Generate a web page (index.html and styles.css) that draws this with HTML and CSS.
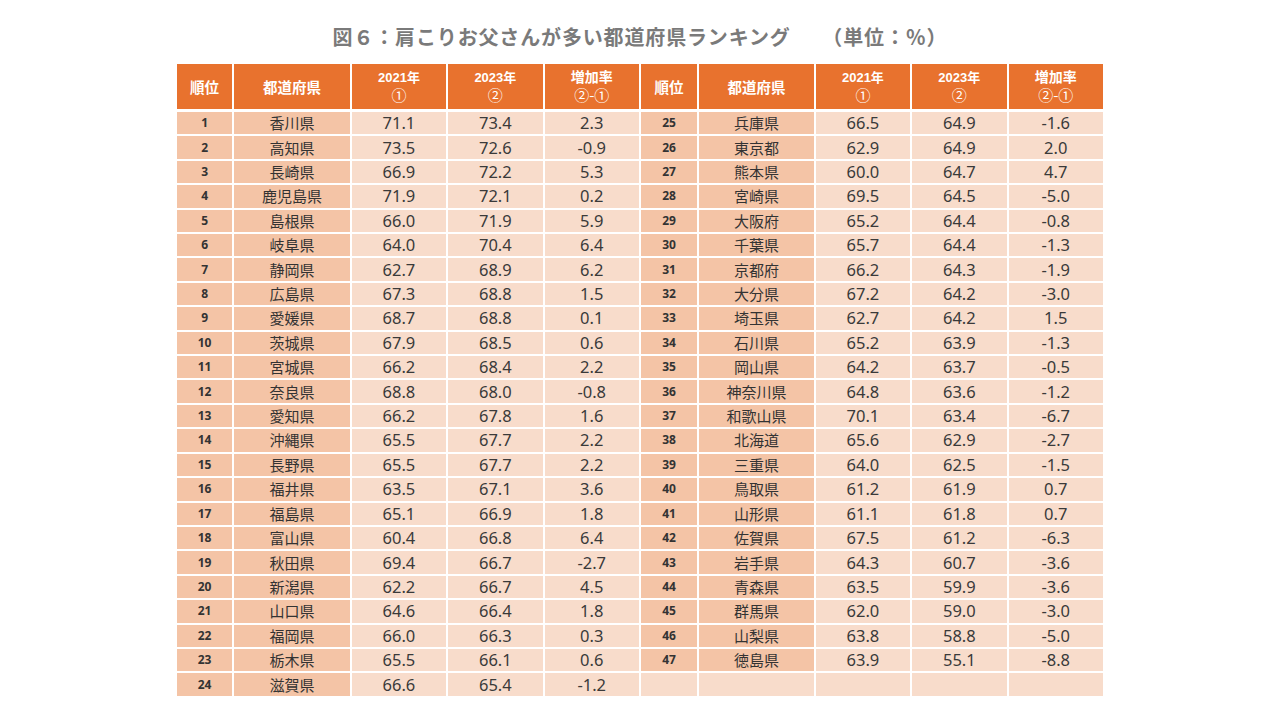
FILE: index.html
```html
<!DOCTYPE html>
<html lang="ja">
<head>
<meta charset="utf-8">
<title>肩こりお父さんが多い都道府県ランキング</title>
<link rel="stylesheet" href="styles.css">
</head>
<body>
<h1 class="title">図６：肩こりお父さんが多い都道府県ランキング　　（単位：％）</h1>
<table class="rank">
<colgroup>
<col class="c-rank"><col class="c-pref"><col class="c-num"><col class="c-num"><col class="c-num">
<col class="c-rank2"><col class="c-pref2"><col class="c-num"><col class="c-num"><col class="c-num">
</colgroup>
<thead>
<tr>
<th class="h1">順位</th><th class="h1">都道府県</th><th>2021年<br><span class="circ">①</span></th><th>2023年<br><span class="circ">②</span></th><th><span class="jp">増加率</span><br><span class="circ">②-①</span></th>
<th class="h1">順位</th><th class="h1">都道府県</th><th>2021年<br><span class="circ">①</span></th><th>2023年<br><span class="circ">②</span></th><th><span class="jp">増加率</span><br><span class="circ">②-①</span></th>
</tr>
</thead>
<tbody>
<tr><td class="r">1</td><td class="p">香川県</td><td>71.1</td><td>73.4</td><td>2.3</td><td class="r">25</td><td class="p">兵庫県</td><td>66.5</td><td>64.9</td><td>-1.6</td></tr>
<tr><td class="r">2</td><td class="p">高知県</td><td>73.5</td><td>72.6</td><td>-0.9</td><td class="r">26</td><td class="p">東京都</td><td>62.9</td><td>64.9</td><td>2.0</td></tr>
<tr><td class="r">3</td><td class="p">長崎県</td><td>66.9</td><td>72.2</td><td>5.3</td><td class="r">27</td><td class="p">熊本県</td><td>60.0</td><td>64.7</td><td>4.7</td></tr>
<tr><td class="r">4</td><td class="p">鹿児島県</td><td>71.9</td><td>72.1</td><td>0.2</td><td class="r">28</td><td class="p">宮崎県</td><td>69.5</td><td>64.5</td><td>-5.0</td></tr>
<tr><td class="r">5</td><td class="p">島根県</td><td>66.0</td><td>71.9</td><td>5.9</td><td class="r">29</td><td class="p">大阪府</td><td>65.2</td><td>64.4</td><td>-0.8</td></tr>
<tr><td class="r">6</td><td class="p">岐阜県</td><td>64.0</td><td>70.4</td><td>6.4</td><td class="r">30</td><td class="p">千葉県</td><td>65.7</td><td>64.4</td><td>-1.3</td></tr>
<tr><td class="r">7</td><td class="p">静岡県</td><td>62.7</td><td>68.9</td><td>6.2</td><td class="r">31</td><td class="p">京都府</td><td>66.2</td><td>64.3</td><td>-1.9</td></tr>
<tr><td class="r">8</td><td class="p">広島県</td><td>67.3</td><td>68.8</td><td>1.5</td><td class="r">32</td><td class="p">大分県</td><td>67.2</td><td>64.2</td><td>-3.0</td></tr>
<tr><td class="r">9</td><td class="p">愛媛県</td><td>68.7</td><td>68.8</td><td>0.1</td><td class="r">33</td><td class="p">埼玉県</td><td>62.7</td><td>64.2</td><td>1.5</td></tr>
<tr><td class="r">10</td><td class="p">茨城県</td><td>67.9</td><td>68.5</td><td>0.6</td><td class="r">34</td><td class="p">石川県</td><td>65.2</td><td>63.9</td><td>-1.3</td></tr>
<tr><td class="r">11</td><td class="p">宮城県</td><td>66.2</td><td>68.4</td><td>2.2</td><td class="r">35</td><td class="p">岡山県</td><td>64.2</td><td>63.7</td><td>-0.5</td></tr>
<tr><td class="r">12</td><td class="p">奈良県</td><td>68.8</td><td>68.0</td><td>-0.8</td><td class="r">36</td><td class="p">神奈川県</td><td>64.8</td><td>63.6</td><td>-1.2</td></tr>
<tr><td class="r">13</td><td class="p">愛知県</td><td>66.2</td><td>67.8</td><td>1.6</td><td class="r">37</td><td class="p">和歌山県</td><td>70.1</td><td>63.4</td><td>-6.7</td></tr>
<tr><td class="r">14</td><td class="p">沖縄県</td><td>65.5</td><td>67.7</td><td>2.2</td><td class="r">38</td><td class="p">北海道</td><td>65.6</td><td>62.9</td><td>-2.7</td></tr>
<tr><td class="r">15</td><td class="p">長野県</td><td>65.5</td><td>67.7</td><td>2.2</td><td class="r">39</td><td class="p">三重県</td><td>64.0</td><td>62.5</td><td>-1.5</td></tr>
<tr><td class="r">16</td><td class="p">福井県</td><td>63.5</td><td>67.1</td><td>3.6</td><td class="r">40</td><td class="p">鳥取県</td><td>61.2</td><td>61.9</td><td>0.7</td></tr>
<tr><td class="r">17</td><td class="p">福島県</td><td>65.1</td><td>66.9</td><td>1.8</td><td class="r">41</td><td class="p">山形県</td><td>61.1</td><td>61.8</td><td>0.7</td></tr>
<tr><td class="r">18</td><td class="p">富山県</td><td>60.4</td><td>66.8</td><td>6.4</td><td class="r">42</td><td class="p">佐賀県</td><td>67.5</td><td>61.2</td><td>-6.3</td></tr>
<tr><td class="r">19</td><td class="p">秋田県</td><td>69.4</td><td>66.7</td><td>-2.7</td><td class="r">43</td><td class="p">岩手県</td><td>64.3</td><td>60.7</td><td>-3.6</td></tr>
<tr><td class="r">20</td><td class="p">新潟県</td><td>62.2</td><td>66.7</td><td>4.5</td><td class="r">44</td><td class="p">青森県</td><td>63.5</td><td>59.9</td><td>-3.6</td></tr>
<tr><td class="r">21</td><td class="p">山口県</td><td>64.6</td><td>66.4</td><td>1.8</td><td class="r">45</td><td class="p">群馬県</td><td>62.0</td><td>59.0</td><td>-3.0</td></tr>
<tr><td class="r">22</td><td class="p">福岡県</td><td>66.0</td><td>66.3</td><td>0.3</td><td class="r">46</td><td class="p">山梨県</td><td>63.8</td><td>58.8</td><td>-5.0</td></tr>
<tr><td class="r">23</td><td class="p">栃木県</td><td>65.5</td><td>66.1</td><td>0.6</td><td class="r">47</td><td class="p">徳島県</td><td>63.9</td><td>55.1</td><td>-8.8</td></tr>
<tr><td class="r">24</td><td class="p">滋賀県</td><td>66.6</td><td>65.4</td><td>-1.2</td><td></td><td></td><td></td><td></td><td></td></tr>
</tbody>
</table>
</body>
</html>
```

FILE: styles.css
```css
html, body {
  margin: 0;
  padding: 0;
  background: #ffffff;
}
body {
  width: 1280px;
  height: 720px;
  font-family: "Noto Sans", "Noto Sans CJK JP", sans-serif;
  color: #3a3a3a;
}
.title {
  margin: 0;
  padding-top: 23px;
  height: 28px;
  line-height: 28px;
  text-align: center;
  font-family: "Noto Sans CJK JP", sans-serif;
  font-weight: 700;
  font-size: 20px;
  color: #7a7a7a;
  letter-spacing: 0.85px;
}
.rank {
  margin: 11px auto 0;
  width: 930px;
  border-collapse: collapse;
  table-layout: fixed;
}
.c-rank { width: 57px; }
.c-pref { width: 117px; }
.c-rank2 { width: 58px; }
.c-pref2 { width: 116px; }
.c-num { width: 96px; }
.rank th, .rank td {
  border: 2px solid #ffffff;
  padding: 0;
  text-align: center;
  vertical-align: middle;
}
.rank th {
  background: #e8722e;
  color: #ffffff;
  height: 45px;
  font-family: "Liberation Sans", "Noto Sans CJK JP", sans-serif;
  font-weight: 700;
  font-size: 13px;
  line-height: 17px;
  border-bottom-width: 3px;
}
.rank th .jp {
  font-family: "Noto Sans CJK JP", sans-serif;
  font-size: 14px;
}
.rank th .circ {
  font-family: "Noto Sans CJK JP", sans-serif;
  font-weight: 400;
  font-size: 15px;
}
.rank th.h1 {
  font-family: "Noto Sans CJK JP", sans-serif;
  font-size: 14.5px;
}
.rank td {
  height: 22.42px;
  background: #f8dccb;
  font-family: "Noto Sans", "Noto Sans CJK JP", sans-serif;
  font-size: 16.5px;
  line-height: 22px;
  color: #3a3a3a;
}
.rank td.r {
  background: #f4c4a6;
  font-family: "Noto Sans", sans-serif;
  font-weight: 700;
  font-size: 12px;
  color: #333333;
}
.rank td.p {
  background: #f4c4a6;
  font-family: "Noto Sans CJK JP", sans-serif;
  font-size: 15px;
  color: #333333;
}
```
